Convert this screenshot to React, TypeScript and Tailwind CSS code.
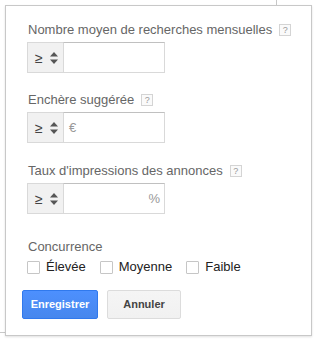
import { ReactNode } from 'react';

function Help() {
  return (
    <span className="ml-[7px] inline-flex h-[12px] w-[12px] items-center justify-center border border-[#d4d4d4] bg-[#fafafa] text-[9px] leading-none text-[#999]">
      ?
    </span>
  );
}

function Label({ children, help = true }: { children: ReactNode; help?: boolean }) {
  return (
    <div className="flex h-[16px] items-center pl-px text-[13px] leading-[16px] text-[#666]">
      {children}
      {help && <Help />}
    </div>
  );
}

function Operator() {
  return (
    <div className="flex h-full w-[37px] items-center gap-[7px] border border-[#d9d9d9] bg-[#f1f1f1] pl-[7px] text-[14px] text-[#444]">
      <span className="leading-none">≥</span>
      <svg width="8" height="12" viewBox="0 0 8 12" className="fill-[#555]">
        <path d="M4 0 L8 4.5 L0 4.5 Z" />
        <path d="M0 7.5 L8 7.5 L4 12 Z" />
      </svg>
    </div>
  );
}

function RangeInput({ prefix, suffix }: { prefix?: string; suffix?: string }) {
  return (
    <div className="mt-[4px] flex h-[31px] w-[138px]">
      <Operator />
      <div className="-ml-px flex flex-1 items-center border border-[#d9d9d9] border-t-[#c0c0c0] bg-white px-[4px] text-[13px] text-[#999]">
        {prefix && <span className="pl-px">{prefix}</span>}
        {suffix && <span className="ml-auto">{suffix}</span>}
      </div>
    </div>
  );
}

function Check({ label }: { label: string }) {
  return (
    <label className="flex items-center gap-[6px] text-[13px] text-[#222]">
      <span className="h-[13px] w-[13px] rounded-[1px] border border-[#c6c6c6] bg-white" />
      {label}
    </label>
  );
}

export default function App() {
  return (
    <div className="relative h-[342px] w-[318px] bg-white font-['Liberation_Sans',Arial,sans-serif]">
      {/* bits of the page behind the popup */}
      <div className="absolute left-[276px] top-0 h-[5px] w-px bg-[#c8c8c8]" />
      <div className="absolute left-0 top-[332px] h-px w-[5px] bg-[#c8c8c8]" />

      <div className="absolute left-[5px] top-[5px] h-[331px] w-[307px] border border-[#c8c8c8] bg-white pl-[21px] pt-[16px] shadow-[0_1px_2px_rgba(0,0,0,0.12)]">
        <Label>Nombre moyen de recherches mensuelles</Label>
        <RangeInput />

        <div className="mt-[19px]">
          <Label>Enchère suggérée</Label>
          <RangeInput prefix="€" />
        </div>

        <div className="mt-[20px]">
          <Label>Taux d'impressions des annonces</Label>
          <RangeInput suffix="%" />
        </div>

        <div className="mt-[25px]">
          <Label help={false}>Concurrence</Label>
          <div className="mt-[4px] flex h-[16px] items-center gap-[14px]">
            <Check label="Élevée" />
            <Check label="Moyenne" />
            <Check label="Faible" />
          </div>
        </div>

        <div className="-ml-[5px] mt-[15px] flex gap-[9px]">
          <button className="h-[29px] w-[76px] rounded-[2px] border border-[#3079ed] bg-gradient-to-b from-[#4d90fe] to-[#4787ed] text-[11px] font-bold text-white">
            Enregistrer
          </button>
          <button className="h-[29px] w-[74px] rounded-[2px] border border-[#dcdcdc] bg-gradient-to-b from-[#f5f5f5] to-[#f1f1f1] text-[11px] font-bold text-[#444]">
            Annuler
          </button>
        </div>
      </div>
    </div>
  );
}
